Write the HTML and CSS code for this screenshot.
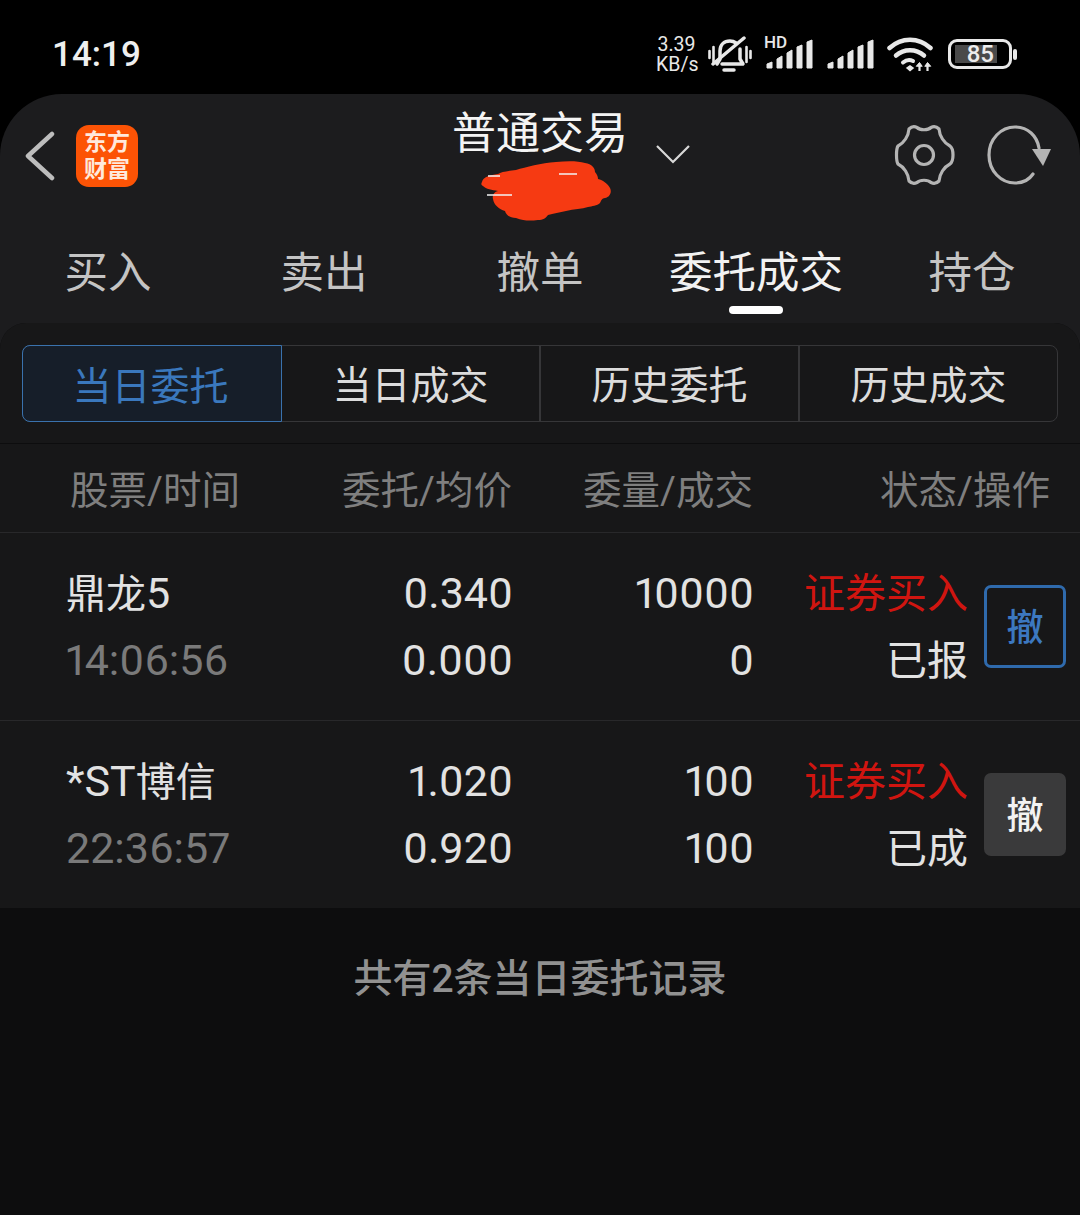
FILE: index.html
```html
<!DOCTYPE html>
<html lang="zh-CN">
<head>
  <meta charset="UTF-8">
  <meta name="viewport" content="width=device-width, initial-scale=1.0">
  <title>普通交易</title>
  <link rel="stylesheet" href="styles.css">
</head>
<body>
  <div class="status-bar">
    <span class="clock">14:19</span>
    <div class="status-icons">
      <div class="net-speed">3.39<br>KB/s</div>
      <svg class="ic-bell" width="44" height="36" viewBox="0 0 44 36" fill="none" stroke="#e8e8e8" stroke-width="3.5" stroke-linecap="round" stroke-linejoin="round">
        <path d="M1.500 15v7M42.500 15v7M5.500 11v15M38.500 11v15" stroke-width="2.600"/>
        <path d="M9 28l3-5v-8c0-6 4-10 10-10 2 0 4 .5 6 2M32 13v10l3 5H14"/>
        <path d="M16 34h10" stroke-width="3.500"/>
        <path d="M5 28L36 2"/>
      </svg>
      <div class="signal-wrap">
        <span class="hd">HD</span>
        <svg class="ic-signal" width="48" height="30" viewBox="0 0 48 30" fill="#e8e8e8" stroke="#e8e8e8" stroke-width="1" stroke-linejoin="round">
          <path d="M1 29v-4l5-2v6zM11 29v-9l5-3v12zM21 29V14l5-3v18zM31 29V8l5-2v23zM41 29V3l5-2v28z"/>
        </svg>
      </div>
      <svg class="ic-signal" width="48" height="30" viewBox="0 0 48 30" fill="#e8e8e8" stroke="#e8e8e8" stroke-width="1" stroke-linejoin="round">
        <path d="M1 29v-4l5-2v6zM11 29v-9l5-3v12zM21 29V14l5-3v18zM31 29V8l5-2v23zM41 29V3l5-2v28z"/>
      </svg>
      <svg class="ic-wifi" width="46" height="35" viewBox="0 0 46 35" fill="none" stroke="#e8e8e8" stroke-width="4.500" stroke-linecap="round">
        <path d="M2.500 11c12-11 29-11 41 0"/>
        <path d="M9 18.500c8-7 20-7 28 0"/>
        <path d="M16 25.500c3-2.500 7-3 10-1.500" stroke-width="4"/>
        <path d="M20 31l3 2.500 3-2.500-3-2z" fill="#e8e8e8" stroke-width="1.500"/>
        <path d="M32.500 34v-6M40.500 34v-6" stroke-width="2.200" stroke-linecap="butt"/>
        <path d="M29.500 29l3-3.500 2.500 3.500zM38 29l2.500-3.500 3 3.500z" fill="#e8e8e8" stroke-width="1"/>
      </svg>
      <div class="battery">
        <div class="battery-body"><span class="battery-fill">85</span></div>
        <div class="battery-cap"></div>
      </div>
    </div>
  </div>

  <div class="sheet">
    <header class="top-bar">
      <div class="top-left">
        <svg width="32" height="50" viewBox="0 0 32 50" fill="none" stroke="#bdbdbd" stroke-width="4.500" stroke-linecap="round" stroke-linejoin="round">
          <path d="M28 3L4 25l24 22"/>
        </svg>
        <div class="logo">东方<br>财富</div>
      </div>
      <div class="title-wrap">
        <div class="title">普通交易</div>
        <svg class="scribble" width="132" height="62" viewBox="0 0 132 62">
          <path fill="#f63a12" d="M1 21c1-5 8-7 16-8 3-2 10-3 18-4 10-3 25-7 40-8 12-1 22-1 29 1 7 1 10 5 10 9 2 2 3 5 3 7 5 1 10 5 12 9 2 4 0 9-5 10-3 0-4 3-5 5-3 3-8 3-12 4-6 2-14 2-22 4-6 1-13 3-18 4-2 3-5 5-10 5-8 1-14 1-22-2-6 0-10-3-11-7-6-2-11-6-12-12-1-4 1-7 5-8-6-1-12-2-15-5-2-1-2-2-1-4z"/>
          <path fill="none" stroke="#f4f4f4" stroke-width="1.500" d="M7 15h12M6 34h25M78 13h18"/>
        </svg>
      </div>
      <svg class="chevron" width="36" height="24" viewBox="0 0 36 24" fill="none" stroke="#d8d8d8" stroke-width="2.200">
        <path d="M2 3l16 16L34 3"/>
      </svg>
      <div class="top-right">
        <svg width="62" height="62" viewBox="0 0 62 62" fill="none" stroke="#b4b4b4" stroke-width="3.200" stroke-linejoin="round">
          <path d="M24 3.500C27 6.500 35 6.500 38 3.500C41 2 44 3 46 5C46.500 12 51 19 57 22C61 25 61 37 57 40C51 43 46.500 50 46 57C44 59 41 60 38 58.500C35 55.500 27 55.500 24 58.500C21 60 18 59 16 57C15.500 50 11 43 5 40C3 37 3 25 5 22C11 19 15.500 12 16 5C18 3 21 2 24 3.500Z"/>
          <circle cx="31" cy="31" r="9.500"/>
        </svg>
        <svg width="66" height="62" viewBox="0 0 66 62" fill="none" stroke="#b4b4b4" stroke-width="3.200" stroke-linecap="round">
          <path d="M47 50c-4 6-11 9-18 9C15 59 3 47 3 31S15 3 29 3c13 0 22 9 24 21"/>
          <path d="M46 25h19l-8 17z" fill="#b4b4b4" stroke="none"/>
        </svg>
      </div>
    </header>

    <nav class="tabs">
      <div class="tab">买入</div>
      <div class="tab">卖出</div>
      <div class="tab">撤单</div>
      <div class="tab active">委托成交</div>
      <div class="tab">持仓</div>
    </nav>

    <main class="panel">
      <div class="seg-wrap">
        <div class="segments">
          <div class="seg active">当日委托</div>
          <div class="seg">当日成交</div>
          <div class="seg">历史委托</div>
          <div class="seg">历史成交</div>
        </div>
      </div>

      <div class="table-head">
        <span class="col-name">股票/时间</span>
        <span class="col-price">委托/均价</span>
        <span class="col-vol">委量/成交</span>
        <span class="col-status">状态/操作</span>
      </div>

      <div class="row">
        <div class="col-name">
          <div class="cell-top">鼎龙<span class="num">5</span></div>
          <div class="cell-sub num">14:06:56</div>
        </div>
        <div class="col-price">
          <div class="cell-top num">0.340</div>
          <div class="cell-top num">0.000</div>
        </div>
        <div class="col-vol">
          <div class="cell-top num">10000</div>
          <div class="cell-top num">0</div>
        </div>
        <div class="col-type">
          <div class="cell-top red">证券买入</div>
          <div class="cell-top">已报</div>
        </div>
        <div class="cancel-btn on">撤</div>
      </div>

      <div class="row last">
        <div class="col-name">
          <div class="cell-top"><span class="num">*ST</span>博信</div>
          <div class="cell-sub num">22:36:57</div>
        </div>
        <div class="col-price">
          <div class="cell-top num">1.020</div>
          <div class="cell-top num">0.920</div>
        </div>
        <div class="col-vol">
          <div class="cell-top num">100</div>
          <div class="cell-top num">100</div>
        </div>
        <div class="col-type">
          <div class="cell-top red">证券买入</div>
          <div class="cell-top">已成</div>
        </div>
        <div class="cancel-btn off">撤</div>
      </div>

      <div class="summary">共有2条当日委托记录</div>
    </main>
  </div>
</body>
</html>
```

FILE: styles.css
```css
/* Global */
* {
  box-sizing: border-box;
}

body {
  margin: 0;
  width: 1080px;
  height: 1215px;
  background: #000;
  font-family: "Roboto", "Noto Sans CJK SC", sans-serif;
  color: #e4e4e4;
  overflow: hidden;
}

/* Status bar */
.status-bar {
  height: 94px;
  display: flex;
  align-items: center;
  justify-content: space-between;
  padding: 14px 63px 0 52px;
}

.clock {
  font-size: 35px;
  font-weight: 500;
  color: #efefef;
}

.status-icons {
  display: flex;
  align-items: center;
}

.status-icons > * {
  flex: none;
}

.net-speed {
  width: 41px;
  padding-top: 2px;
  font-size: 19.500px;
  line-height: 20px;
  text-align: center;
  white-space: nowrap;
  color: #e8e8e8;
}

.ic-bell {
  margin-left: 11px;
}

.signal-wrap {
  position: relative;
  height: 30px;
  margin-left: 14px;
  margin-right: 13px;
}

.ic-signal {
  display: block;
}

.hd {
  position: absolute;
  left: -2px;
  top: -5px;
  font-size: 17px;
  line-height: 16px;
  font-weight: 500;
  color: #e8e8e8;
}

.ic-wifi {
  margin-left: 12px;
}

.battery {
  display: flex;
  align-items: center;
  gap: 1px;
  margin-left: 15px;
}

.battery-body {
  width: 64px;
  height: 30px;
  padding: 3px 4px;
  border: 3px solid #e8e8e8;
  border-radius: 9px;
}

.battery-fill {
  display: block;
  width: 42px;
  height: 100%;
  background: #4a4a4a;
  font-size: 24px;
  line-height: 18px;
  font-weight: 500;
  text-align: right;
  padding-right: 3px;
  color: #ececec;
}

.battery-cap {
  width: 4px;
  height: 11px;
  background: #e8e8e8;
  border-radius: 2px;
}

/* Sheet */
.sheet {
  height: 1121px;
  display: flex;
  flex-direction: column;
  background: #1c1c1e;
  border-radius: 62px 62px 0 0;
}

.top-bar {
  height: 119px;
  display: flex;
  position: relative;
  justify-content: space-between;
  padding: 0 28px 0 24px;
}

.top-left {
  display: flex;
  align-items: center;
  gap: 20px;
  height: 124px;
}

.logo {
  width: 62px;
  height: 62px;
  background: #fc5305;
  border-radius: 13px;
  color: #ffe9dc;
  font-family: "Noto Sans CJK SC", sans-serif;
  font-size: 23px;
  line-height: 27px;
  font-weight: 700;
  text-align: center;
  padding-top: 2px;
}

.title-wrap {
  position: absolute;
  left: 452px;
  top: 10px;
}

.title {
  font-size: 44px;
  line-height: 60px;
  color: #f4f4f4;
  white-space: nowrap;
}

.scribble {
  position: absolute;
  left: 29px;
  top: 57px;
}

.chevron {
  position: absolute;
  left: 655px;
  top: 49px;
}

.top-right {
  display: flex;
  align-items: center;
  gap: 31px;
  height: 122px;
}

/* Tabs */
.tabs {
  height: 110px;
  display: flex;
}

.tab {
  width: 216px;
  padding-top: 31px;
  text-align: center;
  font-size: 43.500px;
  line-height: 60px;
  color: #c4c4c4;
  position: relative;
}

.tab.active {
  color: #f2f2f2;
}

.tab.active::after {
  content: "";
  position: absolute;
  left: 81px;
  top: 93px;
  width: 54px;
  height: 8px;
  background: #fff;
  border-radius: 4px;
}

/* Panel */
.panel {
  flex: 1;
  background: #0d0d0e;
  border-radius: 26px 26px 0 0;
}

.seg-wrap {
  height: 121px;
  padding: 22px;
  background: #171718;
  border-bottom: 1px solid #0d0d0e;
  border-radius: 26px 26px 0 0;
}

.segments {
  height: 77px;
  display: flex;
  border: 1px solid #363638;
  border-radius: 8px;
}

.seg {
  width: 259px;
  padding-bottom: 4px;
  display: flex;
  align-items: center;
  justify-content: center;
  font-size: 39px;
  color: #dcdcdc;
  border-right: 2px solid #363638;
}

.seg:last-child {
  flex: 1;
  border-right: none;
}

.seg.active {
  width: 260px;
  margin: -1px 0 -1px -1px;
  padding: 0 3px 2px 0;
  color: #3a78bd;
  background: #161e29;
  border: 1px solid #3a72ad;
  border-radius: 8px 0 0 8px;
}

.table-head {
  height: 89px;
  display: flex;
  align-items: center;
  padding: 0 30px 2px 70px;
  background: #171718;
  border-bottom: 1px solid #28282a;
  font-size: 38.500px;
  color: #7f7f7f;
  white-space: nowrap;
}

.col-name {
  width: 271px;
}

.col-price {
  width: 171px;
  text-align: right;
}

.col-vol {
  width: 241px;
  text-align: right;
}

.col-status {
  flex: 1;
  text-align: right;
}

.row {
  height: 188px;
  display: flex;
  align-items: center;
  padding: 0 14px 0 66px;
  background: #171718;
  border-bottom: 1px solid #28282a;
}

.row .col-name {
  width: 277px;
}

.row .col-price {
  width: 170px;
}

.row .col-vol {
  width: 241px;
}

.row.last {
  height: 187px;
  border-bottom: none;
}

.cell-top,
.cell-sub {
  height: 67px;
  font-size: 40px;
  line-height: 67px;
  color: #e2e2e2;
  white-space: nowrap;
}

.cell-sub {
  color: #7a7a7a;
}

.num {
  font-size: 43px;
  font-variant-numeric: proportional-nums;
}

.col-type {
  width: 214px;
  padding-top: 2px;
  text-align: right;
}

.col-type .cell-top {
  font-size: 41px;
}

.col-type .red {
  color: #d01510;
}

.cancel-btn {
  width: 82px;
  height: 83px;
  margin-left: 16px;
  padding-bottom: 3px;
  display: flex;
  align-items: center;
  justify-content: center;
  border-radius: 7px;
  font-size: 37px;
  font-weight: 500;
}

.cancel-btn.on {
  color: #3c78c0;
  border: 3px solid #2f6aac;
}

.cancel-btn.off {
  color: #f2f2f2;
  background: #3a3a3b;
}

.summary {
  padding-top: 44px;
  text-align: center;
  font-size: 39px;
  line-height: 54px;
  font-weight: 500;
  color: #919191;
}
```
